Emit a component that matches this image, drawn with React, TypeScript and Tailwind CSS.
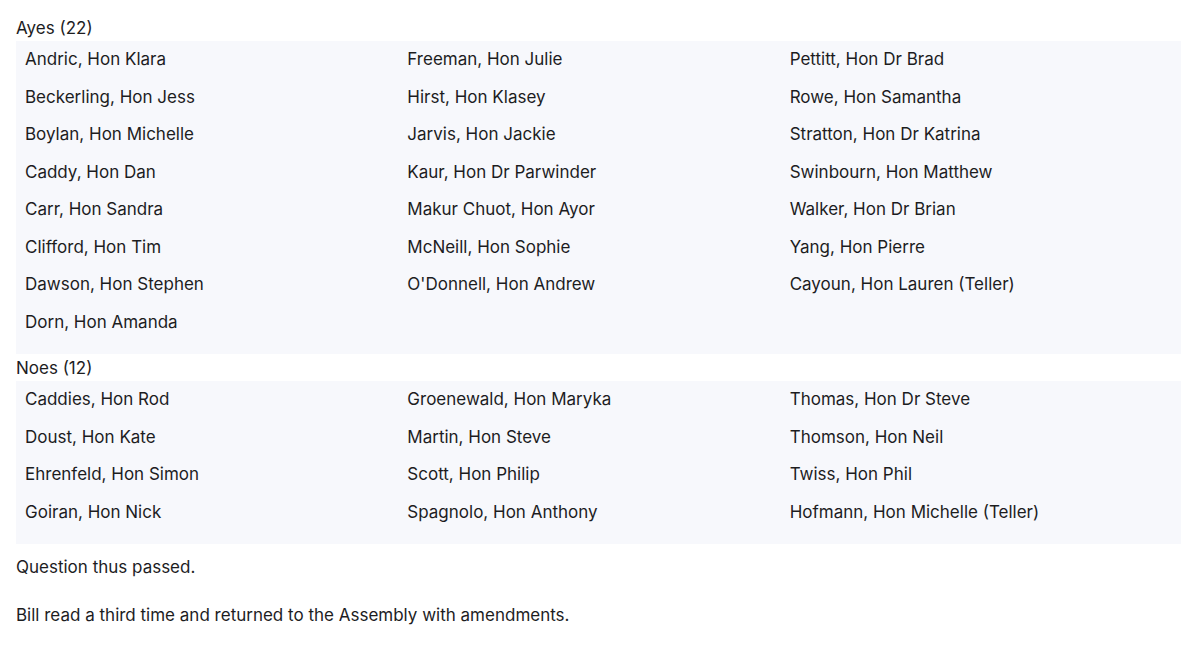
import React from "react";

const ayes = [
  "Andric, Hon Klara",
  "Freeman, Hon Julie",
  "Pettitt, Hon Dr Brad",
  "Beckerling, Hon Jess",
  "Hirst, Hon Klasey",
  "Rowe, Hon Samantha",
  "Boylan, Hon Michelle",
  "Jarvis, Hon Jackie",
  "Stratton, Hon Dr Katrina",
  "Caddy, Hon Dan",
  "Kaur, Hon Dr Parwinder",
  "Swinbourn, Hon Matthew",
  "Carr, Hon Sandra",
  "Makur Chuot, Hon Ayor",
  "Walker, Hon Dr Brian",
  "Clifford, Hon Tim",
  "McNeill, Hon Sophie",
  "Yang, Hon Pierre",
  "Dawson, Hon Stephen",
  "O'Donnell, Hon Andrew",
  "Cayoun, Hon Lauren (Teller)",
  "Dorn, Hon Amanda",
];

const noes = [
  "Caddies, Hon Rod",
  "Groenewald, Hon Maryka",
  "Thomas, Hon Dr Steve",
  "Doust, Hon Kate",
  "Martin, Hon Steve",
  "Thomson, Hon Neil",
  "Ehrenfeld, Hon Simon",
  "Scott, Hon Philip",
  "Twiss, Hon Phil",
  "Goiran, Hon Nick",
  "Spagnolo, Hon Anthony",
  "Hofmann, Hon Michelle (Teller)",
];

function Division({ title, names }: { title: string; names: string[] }) {
  return (
    <div>
      <h3 className="mt-[2px] h-6 leading-6">{title}</h3>
      <ul className="mt-px grid grid-cols-3 bg-[#f7f8fc] px-[9px] pb-[13px]">
        {names.map((n) => (
          <li key={n} className="flex h-[37.5px] items-center">
            {n}
          </li>
        ))}
      </ul>
    </div>
  );
}

export default function App() {
  return (
    <div
      className="min-h-[653px] bg-white pl-4 pr-[19px] pt-[14px] text-[17px] text-[#1d1d1f]"
      style={{ fontFamily: "Inter, 'Liberation Sans', sans-serif" }}
    >
      <Division title="Ayes (22)" names={ayes} />
      <Division title="Noes (12)" names={noes} />
      <p className="mt-[11px] h-6 leading-6">Question thus passed.</p>
      <p className="mt-6 h-6 leading-6">Bill read a third time and returned to the Assembly with amendments.</p>
    </div>
  );
}
